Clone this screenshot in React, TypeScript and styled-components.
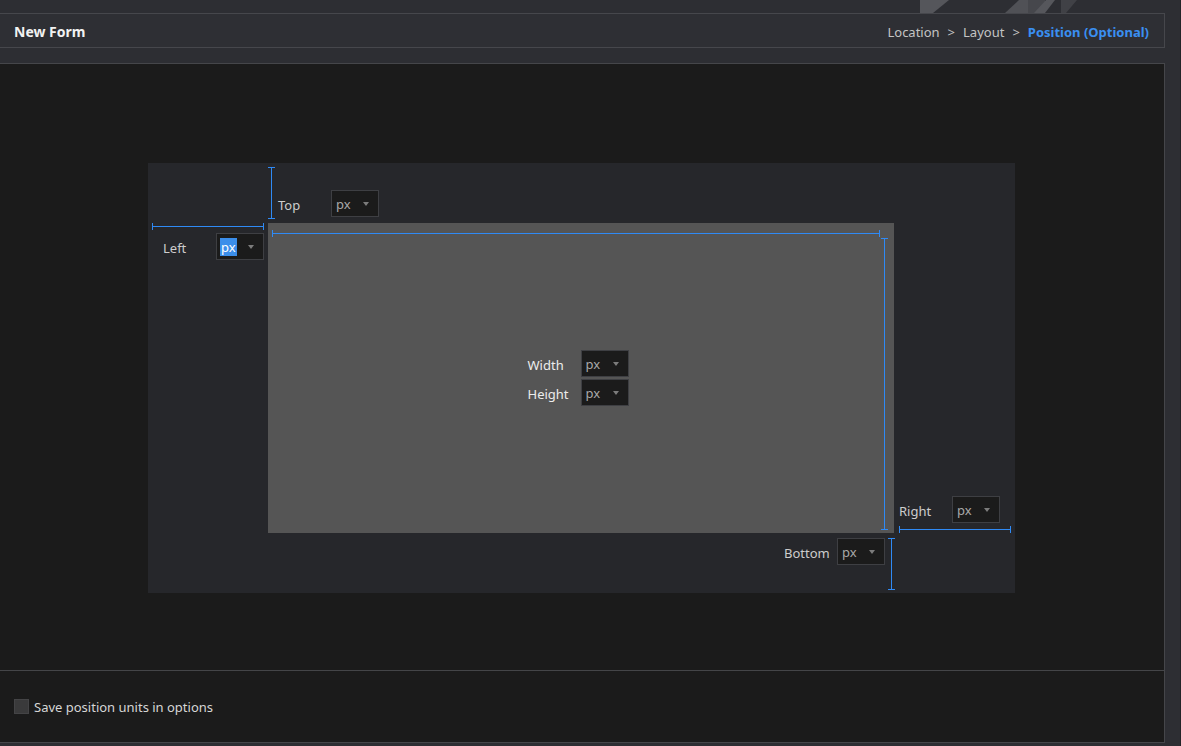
import styled, { createGlobalStyle, css } from 'styled-components';

const BLUE = '#2f8af5';

const GlobalStyle = createGlobalStyle`
  html, body {
    margin: 0;
    background: #2d2e33;
  }
  body {
    font-family: "Noto Sans", "Open Sans", sans-serif;
    font-size: 13px;
    color: #cdcdcd;
  }
`;

const Page = styled.div`
  box-sizing: border-box;
  width: 1181px;
  height: 746px;
  display: flex;
  flex-direction: column;
  overflow: hidden;
  border-right: 1px solid #232428;
`;

const TopStrip = styled.div`
  height: 13px;
  display: flex;
  padding-left: 920px;
`;

const Header = styled.header`
  box-sizing: border-box;
  height: 35px;
  margin-right: 15px;
  display: flex;
  align-items: center;
  justify-content: space-between;
  padding: 2px 15px 0 14px;
  background: #2e2f34;
  border-top: 1px solid #46474c;
  border-bottom: 1px solid #46474c;
  border-right: 1px solid #46474c;

  h1 {
    margin: 0;
    font-size: 14px;
    font-weight: 700;
    color: #f2f2f2;
  }
`;

const Crumbs = styled.nav`
  display: flex;
  align-items: center;
  color: #c4c4c4;
`;

const Crumb = styled.span<{ $active?: boolean }>`
  ${({ $active }) =>
    $active &&
    css`
      color: #3a8ff2;
      font-weight: 700;
    `}
`;

const Sep = styled.span`
  margin: 0 8px;
`;

const Main = styled.main`
  flex: 1;
  margin: 15px 15px 3px 0;
  display: flex;
  flex-direction: column;
  background: #1b1b1b;
  border-top: 1px solid #45464a;
  border-right: 1px solid #45464a;
  border-bottom: 1px solid #45464a;
`;

const Stage = styled.section`
  flex: 1;
  display: flex;
  justify-content: center;
  align-items: flex-start;
  padding: 99px 1px 0 0;
`;

const Footer = styled.footer`
  height: 71px;
  display: flex;
  align-items: center;
  padding-left: 14px;
  border-top: 1px solid #444548;
  color: #d6d6d6;
`;

const Check = styled.span`
  box-sizing: border-box;
  width: 15px;
  height: 15px;
  margin-right: 5px;
  background: #3a3a3b;
  border: 1px solid #444446;
`;

const Panel = styled.div`
  display: grid;
  grid-template-columns: 120px 626px 121px;
  grid-template-rows: 60px 310px 60px;
  background: #26272b;
`;

const TopCell = styled.div`
  grid-area: 1 / 2;
  display: flex;
  align-items: flex-end;
  padding: 4px 0;
`;

const LeftCell = styled.div`
  grid-area: 2 / 1;
  display: flex;
  flex-direction: column;
  align-items: flex-end;
  gap: 3px;
  padding-right: 4px;
`;

const RightCell = styled.div`
  grid-area: 2 / 3;
  display: flex;
  flex-direction: column;
  justify-content: flex-end;
  align-items: flex-start;
  gap: 3px;
  padding-left: 5px;
`;

const BottomCell = styled.div`
  grid-area: 3 / 2;
  display: flex;
  justify-content: flex-end;
  align-items: flex-start;
  gap: 3px;
  padding-top: 5px;
  margin-right: -1px;
`;

const Box = styled.div`
  grid-area: 2 / 2;
  display: grid;
  grid-template-columns: 1fr 7px;
  grid-template-rows: 7px 1fr;
  gap: 1px;
  padding: 7px 6px 3px 4px;
  background: #555555;
`;

const SizeFields = styled.div`
  grid-area: 1 / 1 / 3 / 3;
  align-self: center;
  justify-self: center;
  margin: 0 4px 4px 0;
  display: grid;
  grid-template-columns: 53px 48px;
  row-gap: 2px;
  align-items: center;
  color: #ececec;
`;

const Marker = styled.div<{ $dir: 'h' | 'v'; $len?: number; $area?: string }>`
  box-sizing: border-box;
  flex: none;
  ${({ $area }) =>
    $area &&
    css`
      grid-area: ${$area};
    `}
  ${({ $dir, $len }) =>
    $dir === 'v'
      ? css`
          width: 7px;
          height: ${$len ? `${$len}px` : 'auto'};
          border-top: 1px solid ${BLUE};
          border-bottom: 1px solid ${BLUE};
          background: linear-gradient(${BLUE}, ${BLUE}) center / 1px 100% no-repeat;
        `
      : css`
          height: 7px;
          width: ${$len ? `${$len}px` : 'auto'};
          border-left: 1px solid ${BLUE};
          border-right: 1px solid ${BLUE};
          background: linear-gradient(${BLUE}, ${BLUE}) center / 100% 1px no-repeat;
        `}
`;

const Field = styled.div<{ $offset?: number }>`
  display: flex;
  align-items: center;
  margin-left: ${({ $offset }) => $offset ?? 0}px;
  margin-bottom: ${({ $offset }) => ($offset ? 2 : 0)}px;
`;

const Label = styled.span`
  width: 53px;
  flex: none;
  padding-top: 2px;
`;

const Select = styled.div`
  box-sizing: border-box;
  width: 48px;
  height: 27px;
  display: flex;
  align-items: center;
  justify-content: space-between;
  padding: 0 9px 0 3px;
  background: #1b1b1b;
  border: 1px solid #3e3f43;
`;

const Value = styled.span<{ $selected?: boolean }>`
  padding: 0 1px;
  line-height: 18px;
  color: #a9a9a9;
  ${({ $selected }) =>
    $selected &&
    css`
      color: #ffffff;
      background: #3b8eea;
    `}
`;

const Caret = styled.span`
  width: 0;
  height: 0;
  border-left: 3px solid transparent;
  border-right: 3px solid transparent;
  border-top: 4px solid #7c7c7c;
`;

const Unit = ({ selected }: { selected?: boolean }) => (
  <Select>
    <Value $selected={selected}>px</Value>
    <Caret />
  </Select>
);

const Shards = () => (
  <svg width="160" height="13" viewBox="920 0 160 13">
    <polygon points="920,0 949,0 933,13 920,13" fill="#55565b" />
    <polygon points="1005,13 1019,0 1028,0 1028,13" fill="#505156" />
    <rect x="1028" y="0" width="17" height="13" fill="#46474c" />
    <polygon points="1034,13 1046,0 1055,0 1045,13" fill="#56575c" />
    <polygon points="1061,0 1077,0 1066,13 1061,13" fill="#404146" />
  </svg>
);

export default function App() {
  return (
    <Page>
      <GlobalStyle />
      <TopStrip>
        <Shards />
      </TopStrip>
      <Header>
        <h1>New Form</h1>
        <Crumbs>
          <Crumb>Location</Crumb>
          <Sep>&gt;</Sep>
          <Crumb>Layout</Crumb>
          <Sep>&gt;</Sep>
          <Crumb $active>Position (Optional)</Crumb>
        </Crumbs>
      </Header>
      <Main>
        <Stage>
          <Panel>
            <TopCell>
              <Marker $dir="v" $len={52} />
              <Field $offset={3}>
                <Label>Top</Label>
                <Unit />
              </Field>
            </TopCell>
            <LeftCell>
              <Marker $dir="h" $len={112} />
              <Field>
                <Label>Left</Label>
                <Unit selected />
              </Field>
            </LeftCell>
            <Box>
              <Marker $dir="h" $area="1 / 1" />
              <Marker $dir="v" $area="2 / 2" />
              <SizeFields>
                <Label>Width</Label>
                <Unit />
                <Label>Height</Label>
                <Unit />
              </SizeFields>
            </Box>
            <RightCell>
              <Field>
                <Label>Right</Label>
                <Unit />
              </Field>
              <Marker $dir="h" $len={112} />
            </RightCell>
            <BottomCell>
              <Field>
                <Label>Bottom</Label>
                <Unit />
              </Field>
              <Marker $dir="v" $len={52} />
            </BottomCell>
          </Panel>
        </Stage>
        <Footer>
          <Check />
          Save position units in options
        </Footer>
      </Main>
    </Page>
  );
}
